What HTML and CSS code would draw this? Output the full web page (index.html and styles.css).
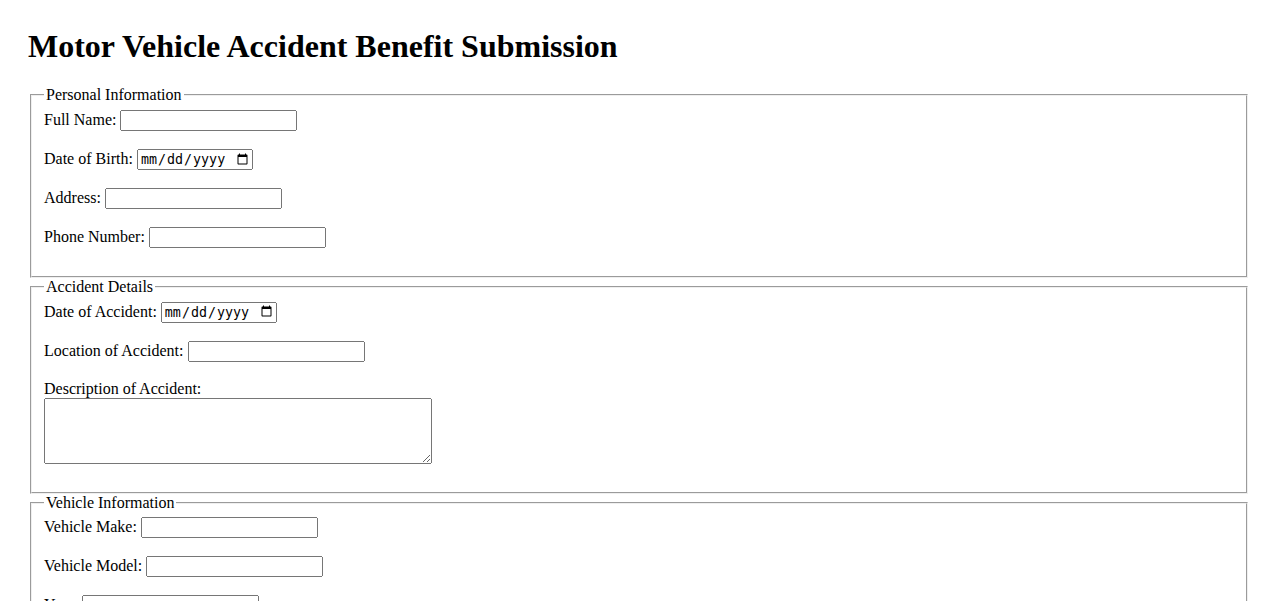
FILE: index.html
```html
<!DOCTYPE html>
<html lang="en">
<head>
  <meta charset="UTF-8">
  <meta name="viewport" content="width=device-width, initial-scale=1.0">
  <title>Motor Vehicle Accident Benefit Submission</title>
  <link rel="stylesheet" href="styles.css">
</head>
<body>
  <h1>Motor Vehicle Accident Benefit Submission</h1>
  <form id="benefit-form">
    <fieldset>
      <legend>Personal Information</legend>
      <label for="full-name">Full Name:</label>
      <input type="text" id="full-name" name="fullName"><br><br>
      <label for="dob">Date of Birth:</label>
      <input type="date" id="dob" name="dob"><br><br>
      <label for="address">Address:</label>
      <input type="text" id="address" name="address"><br><br>
      <label for="phone">Phone Number:</label>
      <input type="tel" id="phone" name="phone"><br><br>
    </fieldset>

    <fieldset>
      <legend>Accident Details</legend>
      <label for="accident-date">Date of Accident:</label>
      <input type="date" id="accident-date" name="accidentDate"><br><br>
      <label for="accident-location">Location of Accident:</label>
      <input type="text" id="accident-location" name="accidentLocation"><br><br>
      <label for="accident-description">Description of Accident:</label><br>
      <textarea id="accident-description" name="accidentDescription" rows="4" cols="50"></textarea><br><br>
    </fieldset>

    <fieldset>
      <legend>Vehicle Information</legend>
      <label for="vehicle-make">Vehicle Make:</label>
      <input type="text" id="vehicle-make" name="vehicleMake"><br><br>
      <label for="vehicle-model">Vehicle Model:</label>
      <input type="text" id="vehicle-model" name="vehicleModel"><br><br>
      <label for="vehicle-year">Year:</label>
      <input type="text" id="vehicle-year" name="vehicleYear"><br><br>
    </fieldset>
  </form>
</body>
</html>
```

FILE: styles.css
```css
body {
  font-family: "Liberation Serif", "Times New Roman", serif;
  padding: 20px;
}
h1 {
  margin-top: 0;
}
input[type="text"],
input[type="tel"] {
  box-sizing: border-box;
  width: 177px;
  height: 21px;
}
input[type="date"] {
  box-sizing: border-box;
  width: 116px;
  height: 21px;
}
textarea {
  box-sizing: border-box;
  width: 388px;
  height: 66px;
  vertical-align: bottom;
}
```
